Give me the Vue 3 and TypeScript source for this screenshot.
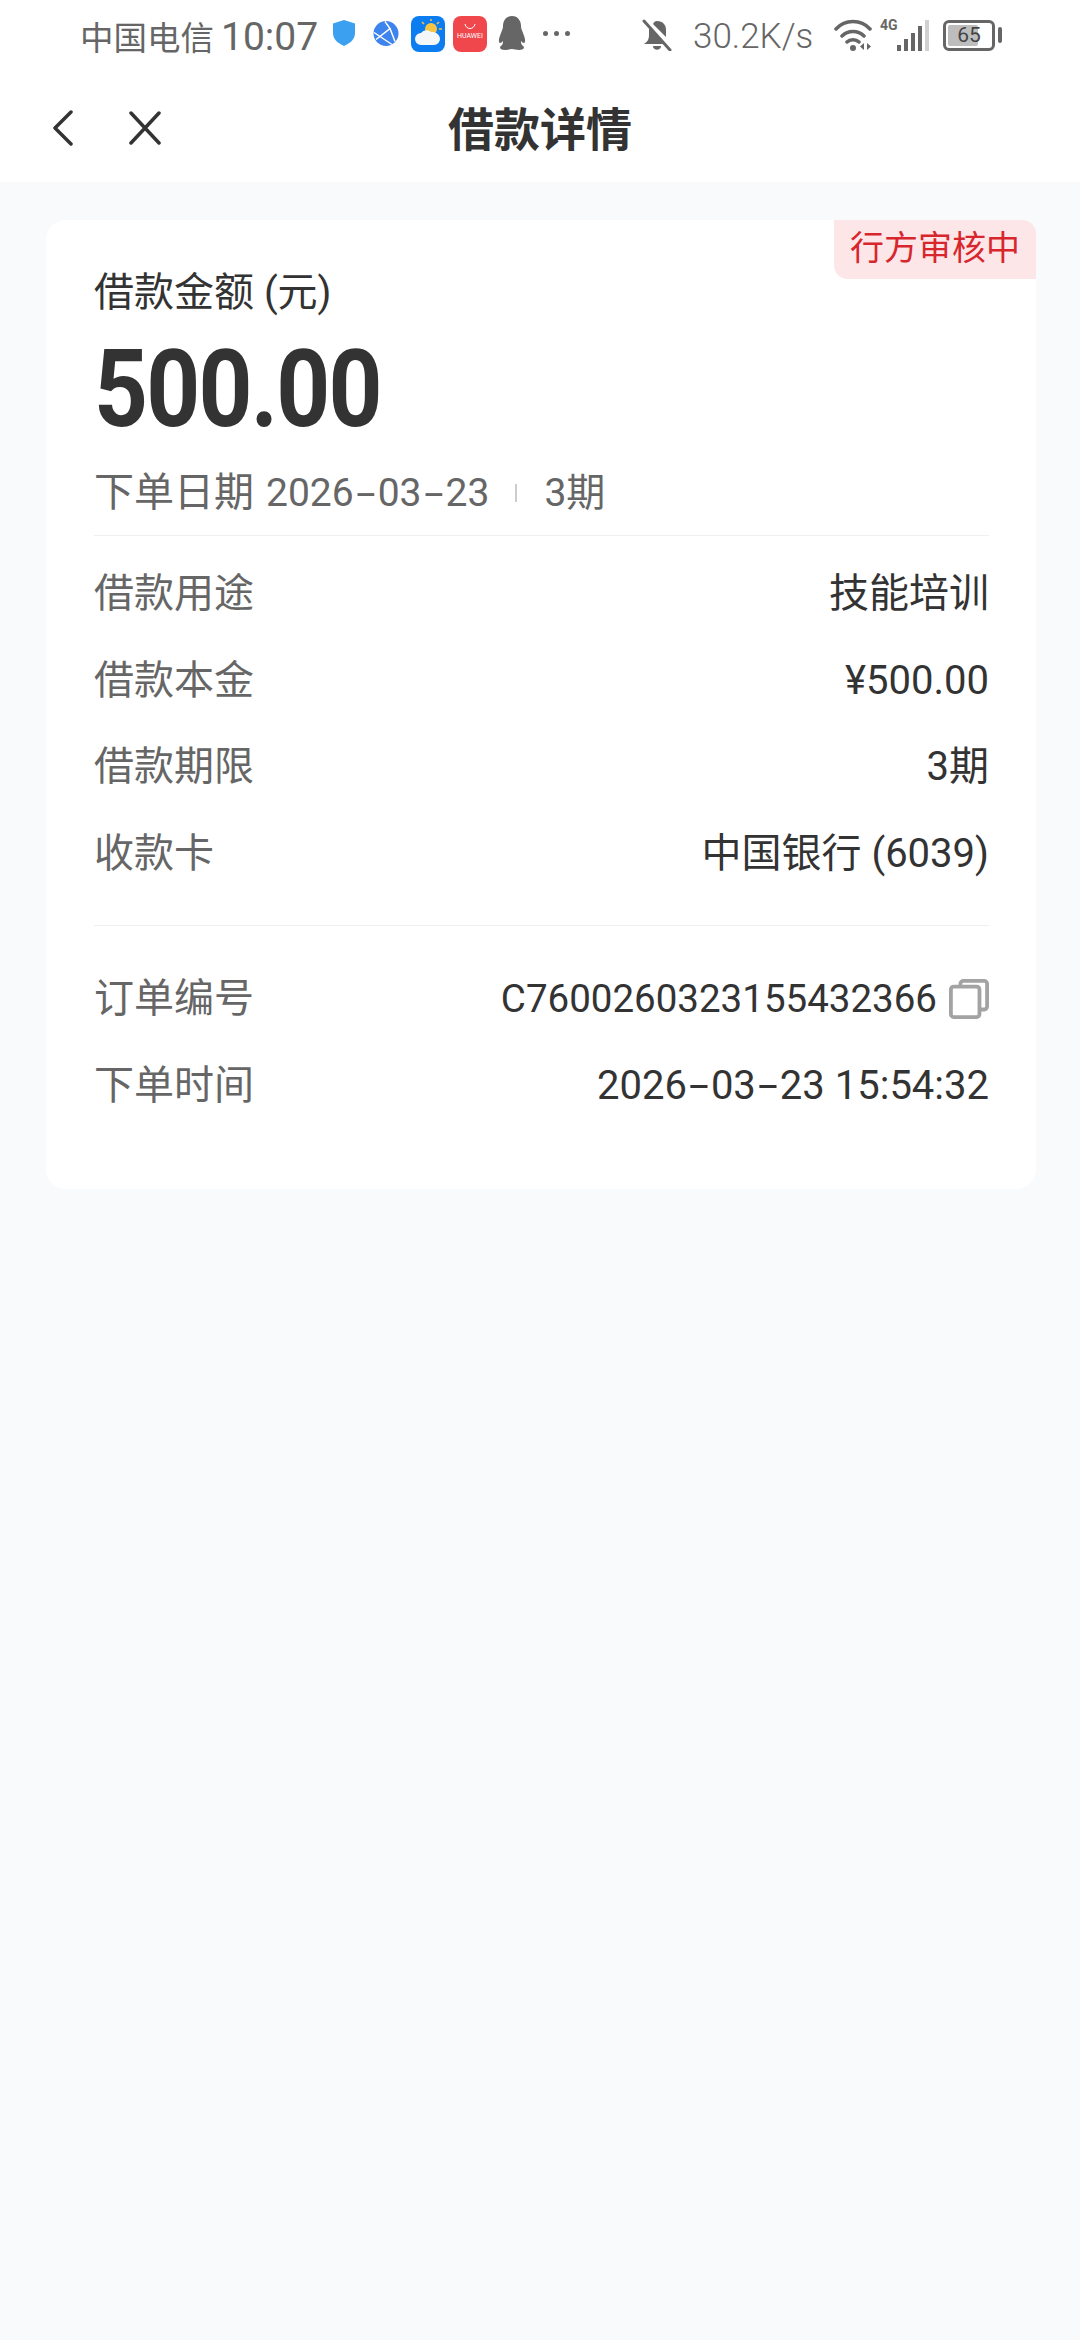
<script setup lang="ts">
const mainRows = [
  { label: '借款用途', value: '技能培训' },
  { label: '借款本金', value: '¥500.00' },
  { label: '借款期限', value: '3期' },
  { label: '收款卡', value: '中国银行 (6039)' },
]

// hyphens in the reference font are much wider than Roboto's
const dateParts = (text: string): string[] => text.split(/(-)/)
</script>

<template>
  <div class="page">
    <div class="statusBar">
      <span class="carrier">中国电信</span>
      <span class="clock">10:07</span>
      <svg class="icoShield" viewBox="0 0 24 26">
        <path fill="#3ba0f0" d="M12 0 23 3.5V13c0 6-4.500 10-11 13C5.500 23 1 19 1 13V3.500Z" />
      </svg>
      <svg class="icoGlobe" viewBox="0 0 26 26">
        <circle cx="13" cy="13" r="12.500" fill="#3d84ee" />
        <path fill="none" stroke="#fff" stroke-width="1.500" d="M1 12 19 24M12 1 17 8 3 19M17 8 22 21" />
      </svg>
      <div class="icoWeather">
        <svg viewBox="0 0 34 36">
          <circle cx="20" cy="13" r="6" fill="#f6c445" />
          <path fill="none" stroke="#f6c445" stroke-width="1.500" d="M20 3v2M28 6l-2 2M11 6l2 2M31 13h-3" />
          <path fill="#f4f7fa" d="M10 29a6 6 0 0 1 0-12c2-3 7-4 10-1 2-.5 9 1 9 7a6 6 0 0 1-6 6Z" />
        </svg>
      </div>
      <div class="icoHuawei">
        <svg viewBox="0 0 14 7">
          <path fill="none" stroke="#fff" stroke-width="1" d="M2 1c1 6 9 6 10 0" />
        </svg>
        <span>HUAWEI</span>
      </div>
      <svg class="icoQq" viewBox="0 0 28 36">
        <path fill="#666" d="M14 0c6 0 9 5 9 10 0 3 1 4 2 7 2 5 3 9 1 10-1 0-2-1-3-2 0 2 0 3 2 5 2 1 1 4-4 4-3 0-5-1-7-1s-4 1-7 1c-5 0-6-3-4-4 2-2 2-3 2-5-1 1-2 2-3 2-2-1-1-5 1-10 1-3 2-4 2-7C5 5 8 0 14 0Z" />
      </svg>
      <div class="icoDots"><i></i><i></i><i></i></div>
      <svg class="icoBell" viewBox="0 0 30 32">
        <path fill="#666" d="M15 2c6 0 9 4 9 9v7l-13-13C12 3 13 2 15 2ZM7 9l15 16H2c3-2 5-4 5-9ZM11 27h8c0 5-8 5-8 0Z" />
        <path stroke="#666" stroke-width="3" stroke-linecap="round" d="M2 2 28 31" />
      </svg>
      <span class="speed">30.2K/s</span>
      <svg class="icoWifi" viewBox="0 0 38 32">
        <path fill="none" stroke="#666" stroke-width="3.500" stroke-linecap="round" d="M2 10C11 0 27 0 36 10M8 17c6-6 16-6 22 0M13 23c3-3 9-3 12 0" />
        <circle cx="19" cy="29" r="3" fill="#666" />
        <path fill="#666" d="M30 24v7l-4-3.500ZM33 24v7l4-3.500Z" />
      </svg>
      <div class="netBlock">
        <span class="net4g">4G</span>
        <div class="signal"><i></i><i></i><i></i><i></i><i class="off"></i></div>
      </div>
      <div class="battery">
        <div class="batteryFill"></div>
        <span>65</span>
      </div>
      <div class="batteryNub"></div>
    </div>

    <header class="navBar">
      <div class="navIcons">
        <svg class="icoBack" viewBox="0 0 20 36">
          <path fill="none" stroke="#333" stroke-width="3.500" stroke-linecap="round" stroke-linejoin="round" d="M18 2 2 18l16 16" />
        </svg>
        <svg class="icoClose" viewBox="0 0 32 34">
          <path fill="none" stroke="#333" stroke-width="3.500" stroke-linecap="round" d="M2 2 30 32M30 2 2 32" />
        </svg>
      </div>
      <h1>借款详情</h1>
    </header>

    <section class="card">
      <div class="tag">行方审核中</div>
      <div class="amountLabel">借款金额 (元)</div>
      <div class="amount">500.00</div>
      <div class="orderMeta">
        <span class="orderMeta__label">下单日期</span>
        <span><template v-for="(part, i) in dateParts('2026-03-23')" :key="i"><span v-if="part === '-'" class="dash">-</span><template v-else>{{ part }}</template></template></span>
        <i class="metaSep"></i>
        <span>3期</span>
      </div>

      <div class="rows rows--main">
        <div v-for="row in mainRows" :key="row.label" class="row">
          <span class="row__label">{{ row.label }}</span>
          <span class="row__value">{{ row.value }}</span>
        </div>
      </div>

      <div class="rows rows--order">
        <div class="row">
          <span class="row__label">订单编号</span>
          <span class="row__value row__value--copy">
            <span class="orderNo">C7600260323155432366</span>
            <svg class="icoCopy" viewBox="0 0 42 42">
              <path fill="none" stroke="#a3a3a3" stroke-width="4" stroke-linejoin="round" d="M12 8V5a3 3 0 0 1 3-3h22a3 3 0 0 1 3 3v24a3 3 0 0 1-3 3h-5" />
              <rect x="2" y="8" width="30" height="32" rx="3" fill="none" stroke="#a3a3a3" stroke-width="4" />
            </svg>
          </span>
        </div>
        <div class="row">
          <span class="row__label">下单时间</span>
          <span class="row__value"><template v-for="(part, i) in dateParts('2026-03-23 15:54:32')" :key="i"><span v-if="part === '-'" class="dash">-</span><template v-else>{{ part }}</template></template></span>
        </div>
      </div>
    </section>
  </div>
</template>

<style>
html, body {
  margin: 0;
  background: #f9fafb;
}
</style>

<style scoped>
.page {
  position: relative;
  height: 2340px;
  overflow: hidden;
  background: #f9fafb;
  font-family: Roboto, "Noto Sans CJK SC", sans-serif;
  color: #333;
}

.statusBar {
  height: 72px;
  padding-left: 80px;
  display: flex;
  align-items: center;
  background: #fff;
  color: #666;
}

.carrier {
  font-size: 33.5px;
  width: 134px;
  white-space: nowrap;
  margin-top: -2px;
}

.clock {
  margin-left: 7px;
  font-size: 39px;
  width: 97px;
  margin-top: 1px;
  white-space: nowrap;
}

.icoShield { width: 24px; height: 26px; margin-left: 14px; margin-top: -6px; }
.icoGlobe { width: 26px; height: 27px; margin-left: 17px; margin-top: -6px; }

.icoWeather, .icoHuawei {
  width: 34px;
  height: 36px;
  border-radius: 8px;
  margin-top: -4px;
}

.icoWeather { margin-left: 12px; background: #0c7df0; }
.icoWeather svg { display: block; width: 34px; height: 36px; }

.icoHuawei {
  margin-left: 8px;
  background: #ef474c;
  display: flex;
  flex-direction: column;
  align-items: center;
  color: #fff;
}

.icoHuawei svg { width: 14px; height: 7px; margin-top: 7px; }
.icoHuawei span { font-size: 7px; line-height: 9px; margin-top: 2px; }

.icoQq { width: 28px; height: 36px; margin-left: 11px; margin-top: -4px; }

.icoDots { display: flex; gap: 6px; margin-left: 17px; margin-top: -6px; }
.icoDots i { width: 5px; height: 5px; border-radius: 50%; background: #666; }

.icoBell { width: 30px; height: 32px; margin-left: 72px; margin-top: -2px; }

.speed {
  margin-left: 21px;
  font-size: 35px;
  font-weight: 300;
  width: 119px;
  white-space: nowrap;
}

.icoWifi { width: 38px; height: 32px; margin-left: 22px; margin-top: -2px; }

.netBlock {
  position: relative;
  width: 49px;
  height: 32px;
  margin-left: 8px;
  margin-top: -2px;
}

.net4g {
  position: absolute;
  left: 0;
  top: -2px;
  font-size: 14px;
  font-weight: 700;
  line-height: 16px;
}

.signal {
  position: absolute;
  right: 0;
  bottom: 0;
  display: flex;
  align-items: flex-end;
  gap: 3px;
}

.signal i { width: 4px; background: #666; }
.signal i:nth-child(1) { height: 6px; }
.signal i:nth-child(2) { height: 12px; }
.signal i:nth-child(3) { height: 18px; }
.signal i:nth-child(4) { height: 25px; }
.signal i.off { height: 31px; background: #d0d0d0; }

.battery {
  position: relative;
  box-sizing: border-box;
  width: 52px;
  height: 31px;
  margin-left: 14px;
  margin-top: -2px;
  border: 3px solid #666;
  border-radius: 6px;
  display: flex;
  align-items: center;
  justify-content: center;
  font-size: 21px;
  color: #444;
}

.batteryFill {
  position: absolute;
  left: 2px;
  top: 2px;
  bottom: 2px;
  width: 30px;
  background: #bdbdbd;
  border-radius: 2px;
}

.battery span { position: relative; }

.batteryNub {
  width: 4px;
  height: 16px;
  margin-left: 3px;
  margin-top: -2px;
  background: #666;
  border-radius: 2px;
}

.navBar {
  height: 110px;
  display: grid;
  grid-template-columns: 1fr auto 1fr;
  align-items: center;
  background: #fff;
}

.navIcons {
  padding-left: 53px;
  margin-top: 2px;
  display: flex;
  align-items: center;
  gap: 56px;
}

.icoBack { width: 20px; height: 36px; }
.icoClose { width: 32px; height: 34px; }

.navBar h1 {
  margin: 6px 0 0;
  font-size: 46px;
  font-weight: 700;
  line-height: 60px;
}

.card {
  position: relative;
  margin: 38px 44px 0 46px;
  padding: 45px 47px 0 48px;
  height: 969px;
  box-sizing: border-box;
  background: #fff;
  border-radius: 20px;
}

.tag {
  position: absolute;
  right: 0;
  top: 0;
  width: 202px;
  height: 59px;
  line-height: 57px;
  text-align: center;
  font-size: 34px;
  color: #d8262e;
  background: #fde6e7;
  border-radius: 0 14px 0 14px;
}

.amountLabel {
  font-size: 40px;
  line-height: 56px;
}

.amount {
  margin-top: 14px;
  height: 110px;
  line-height: 110px;
  font-size: 107px;
  font-weight: 700;
  letter-spacing: -2px;
  transform: scaleX(0.88);
  transform-origin: left center;
  white-space: nowrap;
}

.orderMeta {
  margin-top: 16px;
  display: flex;
  align-items: baseline;
  height: 56px;
  line-height: 64px;
  font-size: 39px;
  color: #666;
}

.orderMeta__label {
  font-size: 40px;
  margin-right: 12px;
}

.metaSep {
  align-self: center;
  width: 2px;
  height: 18px;
  margin: 8px 27px 0 26px;
  background: #ccc;
}

.dash {
  display: inline-block;
  width: 24px;
  text-align: center;
  transform: scaleX(1.8);
}

.rows--main {
  margin-top: 18px;
  padding-top: 15px;
  padding-bottom: 28px;
  border-top: 1px solid #f0f0f0;
  border-bottom: 1px solid #f0f0f0;
}

.rows--order { padding-top: 30px; }

.row {
  height: 86.5px;
  line-height: 86.5px;
  display: flex;
  align-items: baseline;
  justify-content: space-between;
  font-size: 40px;
}

.row__label { color: #666; }
.row__value { color: #333; }

.row__value--copy {
  display: flex;
  align-items: baseline;
  gap: 12px;
}

.orderNo { font-size: 38.5px; }
.icoCopy { width: 40px; height: 40px; align-self: center; }
</style>
